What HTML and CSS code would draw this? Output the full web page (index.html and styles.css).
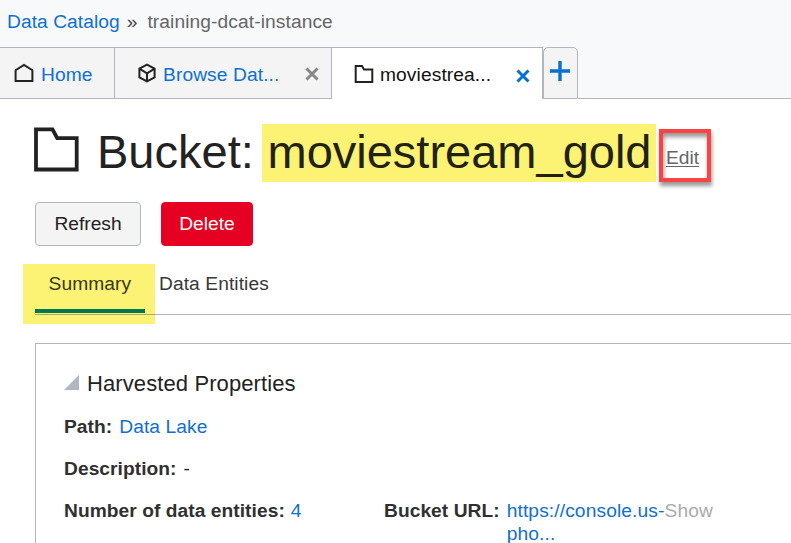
FILE: index.html
```html
<!DOCTYPE html>
<html lang="en">
<head>
<meta charset="utf-8">
<title>Data Catalog</title>
<link rel="stylesheet" href="styles.css">
</head>
<body>
<header class="masthead">
  <nav class="crumbs"><a class="link">Data Catalog</a><span class="sep">»</span><span class="current">training-dcat-instance</span></nav>
  <div class="tabs">
    <div class="tab home">
      <svg class="icon" width="20" height="20" viewBox="0 0 20 20"><path d="M1.600 18V7.200L10 2l8.400 5.200V18z"/></svg>
      <a class="link">Home</a>
    </div>
    <div class="tab browse">
      <svg class="icon" width="20" height="20" viewBox="0 0 20 20"><path d="M10 1.700l7.600 4v8.600l-7.600 4-7.600-4V5.700zM2.400 5.700l7.600 4.700 7.600-4.700M10 10.400v7.900"/></svg>
      <a class="link">Browse Dat...</a>
      <svg class="close" width="14" height="14" viewBox="0 0 14 14"><path d="M1.500 1.500l11 11M12.500 1.500l-11 11"/></svg>
    </div>
    <div class="tab active">
      <svg class="icon" width="20" height="20" viewBox="0 0 20 20"><path d="M1.700 18V2h6.300l2 3.400h8.300V18z"/></svg>
      <span class="label">moviestrea...</span>
      <svg class="close" width="14" height="14" viewBox="0 0 14 14"><path d="M1.500 1.500l11 11M12.500 1.500l-11 11"/></svg>
    </div>
    <div class="tab add"><svg width="20" height="20" viewBox="0 0 20 20"><path d="M10 0v20M0 10h20"/></svg></div>
    <div class="filler"></div>
  </div>
</header>
<main class="content">
  <div class="heading">
    <svg class="folder" width="45" height="45" viewBox="0 0 45 45"><path d="M2 2.300h16.500l4.700 8.800H42.700V42.500H2z"/></svg>
    <h1><span class="kind">Bucket:</span><mark class="name">moviestream_gold</mark></h1>
    <span class="edit"><a>Edit</a></span>
  </div>
  <div class="actions">
    <button class="btn">Refresh</button>
    <button class="btn danger">Delete</button>
  </div>
  <div class="subtabs">
    <div class="subtab selected"><span>Summary</span></div>
    <div class="subtab"><span>Data Entities</span></div>
  </div>
  <section class="panel">
    <h2><svg width="15" height="15" viewBox="0 0 15 15"><path d="M15 0v15H0z"/></svg><span>Harvested Properties</span></h2>
    <div class="row"><b>Path:</b><a class="link path">Data Lake</a></div>
    <div class="row"><b>Description:</b><span class="dash">-</span></div>
    <div class="row split">
      <div class="cell"><b>Number of data entities:</b><a class="link count">4</a></div>
      <div class="cell"><b>Bucket URL:</b><a class="link url">https://console.us-<br>pho...</a><span class="show">Show</span></div>
    </div>
  </section>
</main>
</body>
</html>
```

FILE: styles.css
```css
* { box-sizing: border-box; }
body {
  margin: 0;
  height: 543px;
  overflow: hidden;
  background: #fff;
  color: #222;
  font: 19.2px/24px "Liberation Sans", Arial, sans-serif;
}
.link { color: #0f6fd3; }
.masthead { background: #f7f9fb; }
.crumbs { display: flex; height: 47px; padding: 10px 7px 0; letter-spacing: .06px; }
.sep { margin-left: 7px; color: #444; }
.current { margin-left: 10px; color: #666; letter-spacing: .09px; }
.tabs { display: flex; height: 52px; }
.tab {
  display: flex;
  align-items: center;
  border: 1px solid #b0b5c1;
  border-left: 0;
  background: #f4f4f4;
  padding-top: 2px;
}
.home { width: 115px; padding-left: 15px; }
.home .link, .browse .link { padding-top: 1px; }
.icon { margin-top: -2px; }
.home .link { margin-left: 6px; letter-spacing: .1px; }
.browse { width: 217px; padding-left: 22px; }
.browse .link { margin-left: 6px; width: 142px; letter-spacing: .1px; }
.active { width: 211px; padding-left: 22px; border-bottom: 0; background: #fff; }
.active .label { margin-left: 6px; width: 136px; color: #111; letter-spacing: .1px; }
.active .close { margin-top: 2px; }
.add { width: 35px; border-left: 1px solid #b0b5c1; border-radius: 5px 5px 0 0; padding: 0 0 4px 6px; }
.filler { flex: 1; border-bottom: 1px solid #b0b5c1; }
svg { display: block; flex: none; }
.icon path { fill: none; stroke: #222; stroke-width: 2; }
.home .icon { margin-left: -1px; margin-right: 1px; }
.browse .icon, .active .icon { margin-left: -.5px; margin-right: .5px; }
.close path { fill: none; stroke: #888; stroke-width: 3; }
.active .close path, .add path { stroke: #0572ce; }
.add path { stroke-width: 3.4; }
.content { padding: 25px 0 0 35px; }
.heading { display: flex; height: 58px; }
.folder { margin: 3px 0 0 -1px; }
.folder path { fill: none; stroke: #222; stroke-width: 3.8; }
h1 { display: flex; margin: 0; font-size: 47px; line-height: 56px; font-weight: 400; }
.kind { width: 165px; margin-left: 18px; }
.name { width: 394px; height: 58px; padding-left: 5.500px; background: #fcf273; color: #222214; }
.edit {
  width: 52px;
  height: 53px;
  margin: 5px 0 0 3px;
  border: 4px solid #fc4343;
  padding: 13px 0 0 3px;
  color: #666;
  box-shadow: 1px 4px 4px rgba(0,0,0,.4), inset 1px 4px 4px rgba(0,0,0,.4);
}
.edit a { text-decoration: underline; text-decoration-thickness: 1px; text-underline-offset: 2px; }
.actions { display: flex; gap: 20px; margin-top: 20px; }
.btn {
  width: 106px;
  height: 44px;
  border: 1px solid #b0b5c1;
  border-radius: 4px;
  padding: 0;
  background: #f4f4f4;
  color: #222;
  font: inherit;
}
.danger { width: 92px; border-color: #e60021; background: #e60021; color: #fff; }
.subtabs { display: flex; height: 51px; margin-top: 18px; border-bottom: 1px solid #b0b5c1; color: #383838; letter-spacing: .08px; }
.subtab { padding: 8px 0 0 4px; }
.selected {
  width: 132px;
  height: 60px;
  margin-left: -12px;
  padding: 8px 0 0 12px;
  background: linear-gradient(#aaa673, #aaa673) 12px 50px / 100% 1px no-repeat #fcf273;
}
.selected span { display: block; width: 110px; height: 41px; padding-left: 13.500px; border-bottom: 4px solid #00754f; color: #383820; }
.panel { height: 200px; margin-top: 28px; padding: 27px 0 0 28px; border: solid #b0b5c1; border-width: 1px 0 0 1px; overflow: hidden; }
h2 { display: flex; align-items: center; margin: 0 0 18px; font-size: 22px; line-height: 26px; font-weight: 400; }
h2 path { fill: #b0b7c3; }
h2 svg { margin-top: -3px; }
h2 span { margin-left: 8px; letter-spacing: .1px; }
.row { display: flex; margin-bottom: 18px; }
.row b { color: #303030; letter-spacing: .05px; }
.cell { display: flex; width: 320px; }
.cell + .cell { width: 400px; }
.path { margin-left: 7px; letter-spacing: .08px; }
.dash { margin-left: 7px; }
.count { margin-left: 6px; }
.url { margin-left: 7px; line-height: 23px; letter-spacing: .11px; }
.show { color: #aaa; letter-spacing: .1px; }
```
